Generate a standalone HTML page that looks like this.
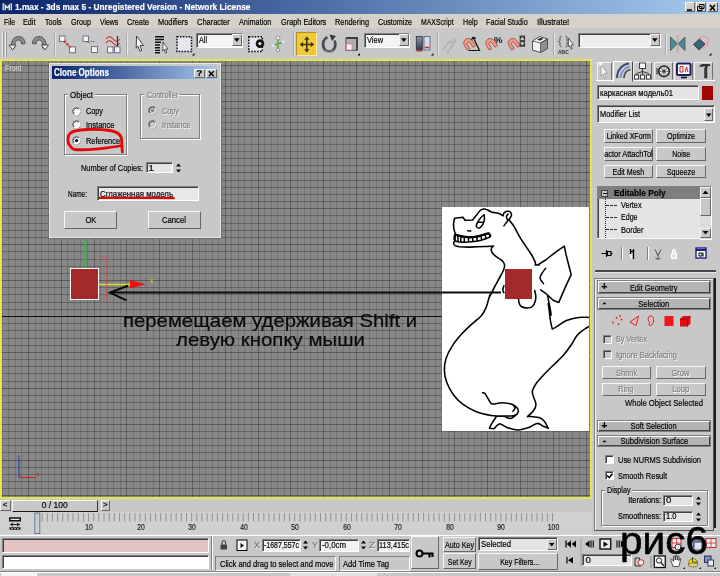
<!DOCTYPE html>
<html><head><meta charset="utf-8"><title>1.max - 3ds max 5</title>
<style>
html,body{margin:0;padding:0;background:#c8c8c8;}
body{width:720px;height:576px;position:relative;overflow:hidden;filter:blur(0.35px);font-family:"Liberation Sans",sans-serif;font-size:11px;}
div,span.t,svg{position:absolute;box-sizing:border-box;}
span.t{white-space:nowrap;display:inline-block;-webkit-text-stroke:0.2px currentColor;}
.btn{background:#c8c8c8;border:1px solid;border-color:#f6f6f6 #666 #666 #f6f6f6;}
.sunk{background:#e4e4e4;border:1px solid;border-color:#808080 #fff #fff #808080;box-shadow:inset 1px 1px 0 #404040;}
.sunkg{background:#c8c8c8;border:1px solid;border-color:#808080 #fff #fff #808080;}
.grp{border:1px solid #808080;box-shadow:1px 1px 0 #fff, inset 1px 1px 0 #fff;}
.hdr{background:#b4b4b4;border:1px solid;border-color:#fff #404040 #404040 #fff;box-shadow:0 0 0 1px #808080;}
</style></head><body>
<div style="left:0.00px;top:0.00px;width:720.00px;height:13.50px;background:linear-gradient(to right,#0a246a 0%,#a6caf0 100%);"></div>
<div style="left:0.00px;top:13.50px;width:720.00px;height:14.50px;background:#d6d2c8;"></div>
<svg style="left:2px;top:2px" width="11" height="10" viewBox="0 0 11 10"><rect x=".5" y=".8" width="9.500" height="8" fill="#1a2a5a"/><path d="M1.200 1.300v7M9.300 1.300v7" stroke="#e8e8f0" stroke-width="1.300"/><path d="M3.300 8.300v-5l2 2.500l2-2.500v5" fill="none" stroke="#f4f4e8" stroke-width="1.300"/></svg>
<span class="t" id="t0" style="font-size:9.8px;line-height:12px;color:#fff;top:1.00px;font-weight:bold;left:14.50px;transform-origin:left center;transform:scaleX(0.848);">1.max - 3ds max 5 - Unregistered Version - Network License</span>
<div class="btn" style="left:684.50px;top:2.00px;width:10.00px;height:10.00px;background:#d4d0c8;"></div>
<div class="btn" style="left:695.50px;top:2.00px;width:10.00px;height:10.00px;background:#d4d0c8;"></div>
<div class="btn" style="left:707.00px;top:2.00px;width:10.50px;height:10.00px;background:#d4d0c8;"></div>
<svg style="left:684px;top:1.5px" width="36" height="11" viewBox="0 0 36 11"><path d="M3 8h5" stroke="#000" stroke-width="1.6" fill="none"/><path d="M15.5 2.5h4.5v4h-4.5zM13.5 4.5h4.5v4h-4.5z" stroke="#000" stroke-width="1" fill="#c8c8c8"/><path d="M26 3l5 5.5M31 3l-5 5.5" stroke="#000" stroke-width="1.5" fill="none"/></svg>
<span class="t" id="t1" style="font-size:9.6px;line-height:12px;color:#000;top:15.80px;left:4.00px;transform-origin:left center;transform:scaleX(0.711);">File</span>
<span class="t" id="t2" style="font-size:9.6px;line-height:12px;color:#000;top:15.80px;left:23.30px;transform-origin:left center;transform:scaleX(0.749);">Edit</span>
<span class="t" id="t3" style="font-size:9.6px;line-height:12px;color:#000;top:15.80px;left:45.00px;transform-origin:left center;transform:scaleX(0.745);">Tools</span>
<span class="t" id="t4" style="font-size:9.6px;line-height:12px;color:#000;top:15.80px;left:70.70px;transform-origin:left center;transform:scaleX(0.750);">Group</span>
<span class="t" id="t5" style="font-size:9.6px;line-height:12px;color:#000;top:15.80px;left:100.00px;transform-origin:left center;transform:scaleX(0.720);">Views</span>
<span class="t" id="t6" style="font-size:9.6px;line-height:12px;color:#000;top:15.80px;left:127.30px;transform-origin:left center;transform:scaleX(0.764);">Create</span>
<span class="t" id="t7" style="font-size:9.6px;line-height:12px;color:#000;top:15.80px;left:158.30px;transform-origin:left center;transform:scaleX(0.771);">Modifiers</span>
<span class="t" id="t8" style="font-size:9.6px;line-height:12px;color:#000;top:15.80px;left:197.30px;transform-origin:left center;transform:scaleX(0.776);">Character</span>
<span class="t" id="t9" style="font-size:9.6px;line-height:12px;color:#000;top:15.80px;left:239.30px;transform-origin:left center;transform:scaleX(0.759);">Animation</span>
<span class="t" id="t10" style="font-size:9.6px;line-height:12px;color:#000;top:15.80px;left:280.70px;transform-origin:left center;transform:scaleX(0.765);">Graph Editors</span>
<span class="t" id="t11" style="font-size:9.6px;line-height:12px;color:#000;top:15.80px;left:335.00px;transform-origin:left center;transform:scaleX(0.768);">Rendering</span>
<span class="t" id="t12" style="font-size:9.6px;line-height:12px;color:#000;top:15.80px;left:377.70px;transform-origin:left center;transform:scaleX(0.750);">Customize</span>
<span class="t" id="t13" style="font-size:9.6px;line-height:12px;color:#000;top:15.80px;left:420.70px;transform-origin:left center;transform:scaleX(0.719);">MAXScript</span>
<span class="t" id="t14" style="font-size:9.6px;line-height:12px;color:#000;top:15.80px;left:462.70px;transform-origin:left center;transform:scaleX(0.740);">Help</span>
<span class="t" id="t15" style="font-size:9.6px;line-height:12px;color:#000;top:15.80px;left:486.00px;transform-origin:left center;transform:scaleX(0.752);">Facial Studio</span>
<span class="t" id="t16" style="font-size:9.6px;line-height:12px;color:#000;top:15.80px;left:536.70px;transform-origin:left center;transform:scaleX(0.830);">Illustrate!</span>
<div style="left:2.00px;top:31.50px;width:1.00px;height:25.00px;background:#ececec;box-shadow:1px 0 0 #9a9a9a;"></div>
<div style="left:4.50px;top:31.50px;width:1.00px;height:25.00px;background:#ececec;box-shadow:1px 0 0 #9a9a9a;"></div>
<div style="left:0.00px;top:58.70px;width:592.00px;height:440.60px;background:#878787;"></div>
<svg style="left:0;top:58.7px" width="592" height="440.6" viewBox="0 58.7 592 440.6" shape-rendering="crispEdges"><path d="M2.26 58.7V499.3M8.82 58.7V499.3M15.38 58.7V499.3M21.94 58.7V499.3M35.06 58.7V499.3M41.62 58.7V499.3M48.18 58.7V499.3M54.74 58.7V499.3M67.86 58.7V499.3M74.42 58.7V499.3M80.98 58.7V499.3M87.54 58.7V499.3M100.66 58.7V499.3M107.22 58.7V499.3M113.78 58.7V499.3M120.34 58.7V499.3M133.46 58.7V499.3M140.02 58.7V499.3M146.58 58.7V499.3M153.14 58.7V499.3M166.26 58.7V499.3M172.82 58.7V499.3M179.38 58.7V499.3M185.94 58.7V499.3M199.06 58.7V499.3M205.62 58.7V499.3M212.18 58.7V499.3M218.74 58.7V499.3M231.86 58.7V499.3M238.42 58.7V499.3M244.98 58.7V499.3M251.54 58.7V499.3M264.66 58.7V499.3M271.22 58.7V499.3M277.78 58.7V499.3M284.34 58.7V499.3M297.46 58.7V499.3M304.02 58.7V499.3M310.58 58.7V499.3M317.14 58.7V499.3M330.26 58.7V499.3M336.82 58.7V499.3M343.38 58.7V499.3M349.94 58.7V499.3M363.06 58.7V499.3M369.62 58.7V499.3M376.18 58.7V499.3M382.74 58.7V499.3M395.86 58.7V499.3M402.42 58.7V499.3M408.98 58.7V499.3M415.54 58.7V499.3M428.66 58.7V499.3M435.22 58.7V499.3M441.78 58.7V499.3M448.34 58.7V499.3M461.46 58.7V499.3M468.02 58.7V499.3M474.58 58.7V499.3M481.14 58.7V499.3M494.26 58.7V499.3M500.82 58.7V499.3M507.38 58.7V499.3M513.94 58.7V499.3M527.06 58.7V499.3M533.62 58.7V499.3M540.18 58.7V499.3M546.74 58.7V499.3M559.86 58.7V499.3M566.42 58.7V499.3M572.98 58.7V499.3M579.54 58.7V499.3" stroke="#000" stroke-opacity=".14" stroke-width="1" fill="none"/><path d="M0 72.08H592M0 79.26H592M0 86.44H592M0 93.62H592M0 107.98H592M0 115.16H592M0 122.34H592M0 129.52H592M0 143.88H592M0 151.06H592M0 158.24H592M0 165.42H592M0 179.78H592M0 186.96H592M0 194.14H592M0 201.32H592M0 215.68H592M0 222.86H592M0 230.04H592M0 237.22H592M0 251.58H592M0 258.76H592M0 265.94H592M0 273.12H592M0 287.48H592M0 294.66H592M0 301.84H592M0 309.02H592M0 323.38H592M0 330.56H592M0 337.74H592M0 344.92H592M0 359.28H592M0 366.46H592M0 373.64H592M0 380.82H592M0 395.18H592M0 402.36H592M0 409.54H592M0 416.72H592M0 431.08H592M0 438.26H592M0 445.44H592M0 452.62H592M0 466.98H592M0 474.16H592M0 481.34H592M0 488.52H592" stroke="#000" stroke-opacity=".24" stroke-width="1" fill="none"/><path d="M28.50 58.7V499.3M61.30 58.7V499.3M94.10 58.7V499.3M126.90 58.7V499.3M159.70 58.7V499.3M192.50 58.7V499.3M225.30 58.7V499.3M258.10 58.7V499.3M290.90 58.7V499.3M323.70 58.7V499.3M356.50 58.7V499.3M389.30 58.7V499.3M422.10 58.7V499.3M454.90 58.7V499.3M487.70 58.7V499.3M520.50 58.7V499.3M553.30 58.7V499.3M586.10 58.7V499.3" stroke="#000" stroke-opacity=".28" stroke-width="1" fill="none"/><path d="M0 64.90H592M0 100.80H592M0 136.70H592M0 172.60H592M0 208.50H592M0 244.40H592M0 280.30H592M0 316.20H592M0 352.10H592M0 388.00H592M0 423.90H592M0 459.80H592M0 495.70H592" stroke="#000" stroke-opacity=".33" stroke-width="1" fill="none"/></svg>
<div style="left:0.00px;top:58.70px;width:592.00px;height:440.60px;border:2.8px solid #e6e64a;"></div>
<span class="t" id="t17" style="font-size:9px;line-height:11px;color:#cccccc;top:62.80px;left:5.00px;transform-origin:left center;transform:scaleX(0.785);">Front</span>
<div style="left:2.00px;top:316.00px;width:441.00px;height:1.40px;background:#101010;"></div>
<div style="left:49.30px;top:63.00px;width:171.40px;height:175.30px;background:#c8c8c8;border:1px solid #e6e6e6;box-shadow:1px 1px 0 #6a6a6a;"></div>
<div style="left:51.80px;top:66.00px;width:166.40px;height:13.00px;background:linear-gradient(to right,#0a246a 0%,#a6caf0 100%);"></div>
<span class="t" id="t18" style="font-size:10px;line-height:12px;color:#fff;top:66.70px;font-weight:bold;left:53.50px;transform-origin:left center;transform:scaleX(0.805);">Clone Options</span>
<div class="btn" style="left:194.00px;top:68.50px;width:10.50px;height:9.50px;"></div>
<div class="btn" style="left:206.00px;top:68.50px;width:10.50px;height:9.50px;"></div>
<span class="t" id="t19" style="font-size:9.5px;line-height:12px;color:#000;top:67.30px;font-weight:bold;left:196.39px;transform-origin:center center;">?</span>
<svg style="left:206px;top:68.5px" width="11" height="10" viewBox="0 0 11 10"><path d="M2.8 2.3l5 5M7.8 2.3l-5 5" stroke="#000" stroke-width="1.4" fill="none"/></svg>
<div class="grp" style="left:64.30px;top:94.30px;width:62.70px;height:61.20px;"></div>
<div class="grp" style="left:140.30px;top:94.30px;width:60.10px;height:44.70px;"></div>
<div style="left:68.00px;top:89.00px;width:27.00px;height:10.00px;background:#c8c8c8;"></div>
<div style="left:144.00px;top:89.00px;width:35.00px;height:10.00px;background:#c8c8c8;"></div>
<span class="t" id="t20" style="font-size:9.6px;line-height:12px;color:#000;top:88.50px;left:70.00px;transform-origin:left center;transform:scaleX(0.829);">Object</span>
<span class="t" id="t21" style="font-size:9.6px;line-height:12px;color:#808080;top:88.50px;left:146.50px;transform-origin:left center;transform:scaleX(0.745);text-shadow:1px 1px 0 #fff;">Controller</span>
<svg style="left:71.10px;top:105.50px" width="11" height="11" viewBox="0 0 11 11"><circle cx="5.5" cy="5.5" r="4" fill="#fff" stroke="#808080" stroke-width="1"/><path d="M2.700 8.300A4 4 0 0 0 8.300 2.700" fill="none" stroke="#fff" stroke-width="1"/><path d="M3.200 7.800A3.200 3.200 0 0 1 7.800 3.200" fill="none" stroke="#404040" stroke-width=".9"/></svg>
<svg style="left:71.10px;top:119.30px" width="11" height="11" viewBox="0 0 11 11"><circle cx="5.5" cy="5.5" r="4" fill="#fff" stroke="#808080" stroke-width="1"/><path d="M2.700 8.300A4 4 0 0 0 8.300 2.700" fill="none" stroke="#fff" stroke-width="1"/><path d="M3.200 7.800A3.200 3.200 0 0 1 7.800 3.200" fill="none" stroke="#404040" stroke-width=".9"/></svg>
<svg style="left:71.10px;top:135.30px" width="11" height="11" viewBox="0 0 11 11"><circle cx="5.5" cy="5.5" r="4" fill="#fff" stroke="#808080" stroke-width="1"/><path d="M2.700 8.300A4 4 0 0 0 8.300 2.700" fill="none" stroke="#fff" stroke-width="1"/><path d="M3.200 7.800A3.200 3.200 0 0 1 7.800 3.200" fill="none" stroke="#404040" stroke-width=".9"/><circle cx="5.5" cy="5.5" r="1.600" fill="#000"/></svg>
<span class="t" id="t22" style="font-size:9.6px;line-height:12px;color:#000;top:105.00px;left:85.50px;transform-origin:left center;transform:scaleX(0.759);">Copy</span>
<span class="t" id="t23" style="font-size:9.6px;line-height:12px;color:#000;top:118.60px;left:85.50px;transform-origin:left center;transform:scaleX(0.786);">Instance</span>
<span class="t" id="t24" style="font-size:9.6px;line-height:12px;color:#000;top:134.50px;left:85.50px;transform-origin:left center;transform:scaleX(0.768);">Reference</span>
<svg style="left:146.90px;top:105.30px" width="11" height="11" viewBox="0 0 11 11"><circle cx="5.5" cy="5.5" r="4" fill="#c8c8c8" stroke="#808080" stroke-width="1"/><path d="M2.700 8.300A4 4 0 0 0 8.300 2.700" fill="none" stroke="#fff" stroke-width="1"/><path d="M3.200 7.800A3.200 3.200 0 0 1 7.800 3.200" fill="none" stroke="#404040" stroke-width=".9"/><circle cx="5.5" cy="5.5" r="1.600" fill="#808080"/></svg>
<svg style="left:146.90px;top:119.30px" width="11" height="11" viewBox="0 0 11 11"><circle cx="5.5" cy="5.5" r="4" fill="#c8c8c8" stroke="#808080" stroke-width="1"/><path d="M2.700 8.300A4 4 0 0 0 8.300 2.700" fill="none" stroke="#fff" stroke-width="1"/><path d="M3.200 7.800A3.200 3.200 0 0 1 7.800 3.200" fill="none" stroke="#404040" stroke-width=".9"/></svg>
<span class="t" id="t25" style="font-size:9.6px;line-height:12px;color:#808080;top:105.00px;left:161.50px;transform-origin:left center;transform:scaleX(0.759);text-shadow:1px 1px 0 #fff;">Copy</span>
<span class="t" id="t26" style="font-size:9.6px;line-height:12px;color:#808080;top:118.60px;left:161.50px;transform-origin:left center;transform:scaleX(0.786);text-shadow:1px 1px 0 #fff;">Instance</span>
<span class="t" id="t27" style="font-size:9.6px;line-height:12px;color:#000;top:161.50px;left:80.70px;transform-origin:left center;transform:scaleX(0.775);">Number of Copies:</span>
<div class="sunk" style="left:145.70px;top:161.70px;width:27.00px;height:11.00px;"></div>
<span class="t" id="t28" style="font-size:9.6px;line-height:12px;color:#000;top:161.50px;left:148.50px;transform-origin:left center;">1</span>
<svg style="left:175px;top:161.5px" width="7" height="12" viewBox="0 0 7 12"><path d="M3.5 1.5L6 4.5H1zM3.5 10.5L6 7.5H1z" fill="#000"/></svg>
<span class="t" id="t29" style="font-size:9.6px;line-height:12px;color:#000;top:187.50px;left:68.30px;transform-origin:left center;transform:scaleX(0.672);">Name:</span>
<div class="sunk" style="left:97.30px;top:186.00px;width:101.70px;height:14.70px;background:#e8e8e8;"></div>
<span class="t" id="t30" style="font-size:9.6px;line-height:12px;color:#000;top:187.50px;left:99.50px;transform-origin:left center;transform:scaleX(0.814);">Сглаженная модель</span>
<div class="btn" style="left:64.30px;top:211.00px;width:52.40px;height:18.30px;"></div>
<div class="btn" style="left:147.70px;top:211.00px;width:53.30px;height:18.30px;"></div>
<span class="t" id="t31" style="font-size:9.6px;line-height:12px;color:#000;top:214.30px;left:83.56px;transform-origin:center center;transform:scaleX(0.793);">OK</span>
<span class="t" id="t32" style="font-size:9.6px;line-height:12px;color:#000;top:214.30px;left:159.36px;transform-origin:center center;transform:scaleX(0.803);">Cancel</span>
<svg style="left:60px;top:120px" width="130" height="90" viewBox="60 120 130 90"><path d="M70.500 146.500C67 143 67 136 70.500 133C76 129 96 128.500 110 130.500C117 131.500 120.500 134 121.500 138.500L122.300 152M121.800 145.500C110 148 86 150.500 74.500 149.500C72.500 149 71.500 148 70.500 146.500" fill="none" stroke="#e00808" stroke-width="2.800" stroke-linejoin="round" stroke-linecap="round"/><path d="M99 197.8c25 .4 50 -.2 75.5 .3" fill="none" stroke="#e00000" stroke-width="2.200"/></svg>
<div style="left:70.20px;top:268.00px;width:29.20px;height:31.80px;background:#a42a2a;border:1px solid #f4f4f4;"></div>
<svg style="left:60px;top:236px" width="100" height="72" viewBox="60 236 100 72"><path d="M85.400 239.500v28.500" stroke="#3cb03c" stroke-width="2.200"/><path d="M99.400 284.400h32" stroke="#e0d828" stroke-width="1.500"/><path d="M130 280l15.800 4.200l-15.800 4.200z" fill="#f01010"/><path d="M99.400 257h7v46" fill="none" stroke="#d04848" stroke-width=".8" stroke-opacity=".8"/><text x="150" y="283" font-family="Liberation Sans,sans-serif" font-size="7" fill="#d8d030">x</text></svg>
<span class="t" id="t33" style="font-size:18.5px;line-height:23px;color:#0a0a0a;top:308.50px;left:123.00px;transform-origin:left center;transform:scaleX(1.098);">перемещаем удерживая Shift и</span>
<span class="t" id="t34" style="font-size:18.5px;line-height:23px;color:#0a0a0a;top:328.00px;left:176.00px;transform-origin:left center;transform:scaleX(1.103);">левую кнопку мыши</span>
<svg style="left:14px;top:454.5px" width="30" height="24" viewBox="14 448 30 24"><path d="M19 470.500v-20" stroke="#2030c0" stroke-width="1"/><path d="M19 470.500h16.500" stroke="#d02020" stroke-width="1"/><text x="17" y="449.500" font-family="Liberation Sans,sans-serif" font-size="6" fill="#2030c0">z</text><text x="36.500" y="469" font-family="Liberation Sans,sans-serif" font-size="6" fill="#d02020">x</text></svg>
<div style="left:442.30px;top:207.30px;width:146.70px;height:223.80px;background:#fff;"></div>
<svg style="left:430px;top:195px" width="159" height="240" viewBox="430 195 159 240"><path fill="none" stroke="#000" stroke-width="1.55" stroke-linejoin="round" stroke-linecap="round" d="M454.6 218.2L462.9 217.2L465.0 220.3L472.6 220.0M472.6 220.0C473.3 219.1 475.4 216.4 476.8 214.7C478.2 213.0 479.5 210.8 481.0 209.9C482.5 208.9 484.1 208.8 485.8 209.2C487.6 209.5 489.3 211.2 491.4 211.9C493.5 212.6 496.4 212.7 498.3 213.3C500.3 214.0 502.4 215.4 503.2 215.8M503.2 215.8C503.4 215.3 503.2 213.4 504.2 212.6C505.1 211.9 507.5 211.0 508.8 211.2C510.0 211.5 511.3 212.9 511.5 214.0C511.8 215.2 510.7 217.2 510.1 218.2C509.6 219.2 508.4 219.9 508.1 220.3M508.1 214.0C507.8 214.5 506.5 215.9 506.4 216.8C506.3 217.7 507.2 219.1 507.4 219.6M508.1 220.3C507.7 220.7 506.7 222.1 506.0 223.1C505.3 224.0 504.2 225.4 503.9 225.8M509.4 220.3C510.1 221.2 512.3 223.9 513.6 225.8C514.9 227.8 515.9 230.0 517.1 232.1C518.2 234.2 519.1 235.9 520.6 238.3C522.1 240.8 524.3 243.9 526.1 246.7C528.0 249.4 530.2 252.5 531.7 255.0C533.2 257.5 534.4 260.3 535.1 261.9C535.8 263.6 535.1 264.2 535.8 264.7C536.5 265.2 538.7 265.0 539.3 265.0M454.6 218.2C454.4 219.0 453.7 221.3 453.6 223.1C453.5 224.8 453.6 226.9 453.9 228.6C454.2 230.3 454.8 232.4 455.3 233.5C455.7 234.5 456.4 234.6 456.7 234.9M455.3 234.9C456.2 235.1 458.8 235.9 460.8 236.2C462.9 236.6 465.2 237.2 467.8 237.2C470.3 237.3 473.6 237.1 476.1 236.7C478.7 236.3 481.0 235.4 483.1 234.9C485.1 234.3 487.4 233.2 488.6 233.5C489.8 233.7 490.5 235.4 490.3 236.2C490.0 237.1 488.9 237.6 487.2 238.3C485.6 239.0 482.8 239.8 480.3 240.4C477.7 241.0 474.7 241.5 471.9 241.8C469.2 242.1 466.2 242.3 463.6 242.2C461.1 242.2 458.2 241.8 456.7 241.4C455.2 241.0 454.8 240.8 454.6 239.7C454.4 238.6 455.2 235.7 455.3 234.9M457.8 235.8L458.1 241.1M460.8 236.7L460.8 241.7M464.3 237.2L464.3 241.9M468.5 237.5L468.5 241.9M472.6 237.2L472.8 241.7M476.8 236.7L477.2 241.1M481.0 235.8L481.7 240.0M485.1 234.6L486.1 238.8M454.6 241.4C454.4 241.7 453.5 242.8 453.6 243.5C453.7 244.2 454.0 245.0 455.0 245.6C456.0 246.1 457.3 246.4 459.4 246.7C461.6 246.9 464.8 247.1 467.8 247.1C470.8 247.1 474.5 246.8 477.5 246.7C480.5 246.6 483.2 246.5 485.8 246.4C488.5 246.3 492.2 246.0 493.5 246.0M493.5 246.0C493.1 246.4 491.7 247.4 491.4 248.3C491.1 249.3 491.2 250.4 491.7 251.5C492.1 252.6 492.9 253.8 494.2 255.0C495.4 256.2 497.5 257.3 499.0 258.5C500.5 259.6 502.3 260.7 503.2 261.9C504.1 263.2 504.6 264.6 504.6 266.1C504.6 267.6 504.0 269.1 503.2 271.0C502.4 272.8 500.9 275.0 499.7 277.2C498.6 279.4 496.8 283.0 496.2 284.2M484.2 214.7C483.5 215.3 481.4 216.8 480.3 218.2C479.1 219.6 477.9 221.7 477.2 223.1C476.6 224.4 476.0 225.7 476.4 226.5C476.8 227.3 478.5 228.4 479.6 227.9C480.7 227.5 482.2 225.3 483.1 223.8C483.9 222.2 484.3 220.4 484.4 218.9C484.6 217.4 484.2 215.4 484.2 214.7M478.2 221.9L483.3 222.5M467.8 230.8L470.6 231.1M535.1 264.9L537.9 264.9L545.6 260.0L555.3 252.4L564.3 246.1L565.7 253.1L568.5 264.2L571.2 274.6L565.7 286.4L558.8 302.4L553.2 300.3L545.6 293.3L540.7 289.9M545.6 268.3C545.0 269.1 543.0 271.6 542.1 273.2C541.2 274.8 539.8 276.3 540.0 278.1C540.2 279.8 542.9 282.7 543.5 283.6M547.6 296.1C547.9 297.3 548.6 300.7 549.0 303.1C549.5 305.4 550.1 308.0 550.4 310.0C550.8 312.0 551.0 314.1 551.1 314.9M518.5 298.9C518.6 299.6 518.7 301.8 519.2 303.1C519.6 304.3 519.9 305.7 521.2 306.5C522.6 307.3 525.6 307.9 527.5 307.9C529.4 307.9 531.1 307.6 532.4 306.5C533.6 305.5 534.6 303.4 535.1 301.7C535.7 299.9 535.9 298.0 535.8 296.1C535.8 294.3 534.9 291.5 534.7 290.6M503.9 285.7C503.7 286.4 502.8 288.7 502.8 289.9C502.8 291.0 503.7 292.2 503.9 292.6M500.4 276.7C499.6 278.1 497.3 281.8 495.6 285.0C493.8 288.2 490.9 294.3 490.0 296.1M489.8 295.0C489.2 297.0 487.6 303.7 486.2 307.2C484.8 310.6 484.0 312.6 481.3 315.7C478.7 318.7 473.8 322.1 470.4 325.4C466.9 328.6 463.7 331.7 460.7 335.1C457.6 338.6 454.6 342.2 452.2 346.1C449.7 349.9 447.4 354.2 446.1 358.2C444.8 362.3 444.3 366.3 444.4 370.4C444.5 374.4 445.3 378.5 446.8 382.5C448.3 386.6 450.7 391.0 453.4 394.7C456.1 398.3 459.2 401.6 463.1 404.4C466.9 407.2 471.8 409.9 476.5 411.7C481.1 413.5 486.4 414.6 491.1 415.4C495.7 416.1 500.6 416.1 504.4 416.1C508.3 416.1 511.8 416.1 514.2 415.4C516.5 414.6 517.9 413.0 518.3 411.7C518.7 410.4 517.6 408.5 516.6 407.3C515.6 406.1 514.9 405.2 512.5 404.4C510.0 403.6 505.4 402.8 502.0 402.7C498.6 402.6 494.5 404.4 492.3 403.9C490.0 403.4 489.8 401.3 488.6 399.5C487.4 397.8 486.0 394.6 485.0 393.5C484.0 392.3 483.0 392.9 482.5 392.7M512.5 404.4C512.9 405.0 514.8 406.9 514.9 408.1C515.0 409.2 513.3 410.7 512.9 411.2M504.4 416.1C505.4 416.5 508.4 418.8 510.5 418.5C512.7 418.2 516.2 414.9 517.3 414.1M496.4 416.6C495.7 417.6 493.4 420.7 492.3 422.6C491.1 424.6 489.8 427.3 489.4 428.2M489.4 428.2L494.0 428.7M494.0 428.7C494.9 427.9 497.4 424.1 499.6 423.9C501.7 423.7 503.8 426.5 506.9 427.5C509.9 428.5 514.2 429.9 517.8 429.9C521.4 429.9 525.5 428.6 528.7 427.5C532.0 426.4 534.8 423.6 537.3 423.4C539.7 423.2 541.5 425.5 543.3 426.3C545.2 427.1 547.4 427.9 548.2 428.2M548.2 428.2C547.6 427.1 546.0 423.2 544.5 421.4C543.1 419.7 541.9 418.6 539.7 417.8C537.5 417.0 533.2 416.8 531.2 416.6C529.1 416.4 528.1 416.6 527.5 416.6M527.5 416.6C528.5 415.6 532.2 412.5 533.6 410.5C535.0 408.5 536.0 406.6 536.0 404.4C536.0 402.2 534.2 399.3 533.6 397.1C533.0 394.9 532.0 393.3 532.4 391.0C532.8 388.8 534.0 386.6 536.0 383.7C538.1 380.9 541.5 377.3 544.5 374.0C547.6 370.8 551.0 367.5 554.3 364.3C557.5 361.1 561.2 357.8 564.0 354.6C566.8 351.3 569.1 348.1 571.3 344.8C573.5 341.6 575.1 337.8 577.4 335.1C579.6 332.5 582.8 330.5 584.7 329.0C586.6 327.6 588.1 327.0 588.8 326.6M548.2 303.5C548.4 304.9 549.0 309.0 549.4 312.0C549.8 315.1 550.1 318.9 550.6 321.7C551.1 324.6 552.0 327.8 552.3 329.0M552.3 329.0C553.1 328.6 554.4 328.0 556.7 326.6C559.1 325.2 562.8 322.1 566.4 320.5C570.1 319.0 574.9 317.9 578.6 317.4C582.3 316.8 587.1 317.4 588.8 317.4"/><path fill="none" stroke="#000" stroke-width="2.3" stroke-linejoin="round" stroke-linecap="round" d="M454.6 239.7C454.7 238.9 454.2 235.4 455.3 234.9C456.3 234.3 458.8 235.9 460.8 236.2C462.9 236.6 465.2 237.2 467.8 237.2C470.3 237.3 473.6 237.1 476.1 236.7C478.7 236.3 481.0 235.4 483.1 234.9C485.1 234.3 487.4 233.2 488.6 233.5C489.8 233.7 490.0 235.8 490.3 236.2"/></svg>
<div style="left:505.00px;top:269.20px;width:27.00px;height:29.40px;background:#a42a2a;"></div>
<svg style="left:105px;top:280px" width="410" height="26" viewBox="105 280 410 26"><path d="M110.500 292.600H501" stroke="#0a0a0a" stroke-width="2" fill="none"/><path d="M128 285.800L110 292.600L126.500 300.400" stroke="#0a0a0a" stroke-width="2.100" fill="none"/></svg>
<div style="left:595.50px;top:80.00px;width:119.00px;height:1.00px;background:#fff;"></div>
<div style="left:596.50px;top:62.30px;width:15.80px;height:18.00px;border:1px solid;border-color:#f4f4f4 #707070 transparent #f4f4f4;"></div>
<div style="left:612.80px;top:61.00px;width:19.80px;height:20.50px;background:#d2d2d2;border:1px solid;border-color:#fff #404040 #d2d2d2 #fff;"></div>
<div style="left:633.10px;top:62.30px;width:19.40px;height:18.00px;border:1px solid;border-color:#f4f4f4 #707070 transparent #f4f4f4;"></div>
<div style="left:653.50px;top:62.30px;width:19.40px;height:18.00px;border:1px solid;border-color:#f4f4f4 #707070 transparent #f4f4f4;"></div>
<div style="left:673.90px;top:62.30px;width:19.40px;height:18.00px;border:1px solid;border-color:#f4f4f4 #707070 transparent #f4f4f4;"></div>
<div style="left:694.30px;top:62.30px;width:19.20px;height:18.00px;border:1px solid;border-color:#f4f4f4 #707070 transparent #f4f4f4;"></div>
<svg style="left:594px;top:60px" width="122" height="22" viewBox="594 60 122 22"><path d="M601 64.500l6.500 9h-3l1.800 4.500l-1.500 .7l-1.900-4.600l-1.900 1.900z" fill="#fafafa" stroke="#909090" stroke-width=".8"/><path d="M600.500 62v4M598.500 64h4M599 62.500l3 3M602 62.500l-3 3" stroke="#fff" stroke-width=".9"/><path d="M617 78c0-8 5-13.500 12-14.500" fill="none" stroke="#384878" stroke-width="2"/><path d="M620.500 78c0-6 4-10.500 9.500-11.500" fill="none" stroke="#8098c8" stroke-width="2"/><path d="M624 78c0-4.500 3-7.500 6.500-8.500" fill="none" stroke="#404858" stroke-width="1.600"/><rect x="639.500" y="63" width="6" height="5.500" fill="#fff" stroke="#303030" stroke-width=".9"/><path d="M642.500 68.500v3M636.500 75.500v-2l6-2l6 2v2M642.500 71.500v4" fill="none" stroke="#303030" stroke-width=".9"/><rect x="634.500" y="75" width="4" height="4" fill="#fff" stroke="#303030" stroke-width=".9"/><rect x="640.500" y="75" width="4" height="4" fill="#fff" stroke="#303030" stroke-width=".9"/><rect x="646.500" y="75" width="4" height="4" fill="#fff" stroke="#303030" stroke-width=".9"/><circle cx="664" cy="71.300" r="5.300" fill="#e8e8e8" stroke="#202020" stroke-width="1.600"/><circle cx="664" cy="71.300" r="1.400" fill="#202020"/><path d="M664 66.500v9.600M659.200 71.300h9.600M660.600 67.900l6.800 6.800M667.400 67.900l-6.800 6.800" stroke="#404040" stroke-width=".7"/><path d="M657 68v6.500" stroke="#202020" stroke-width="1"/><rect x="677" y="63.500" width="13.500" height="11.500" rx="1" fill="#f8f8f8" stroke="#182060" stroke-width="2"/><path d="M680 66.500h3v5.500h-3zM685 72l1.500-5l1.500 5" fill="none" stroke="#d02020" stroke-width="1"/><path d="M681 77.500h6" stroke="#101010" stroke-width="1.600"/><path d="M699 66.500c1-2 3-2.500 5-2.500h5c1 0 1.500 1 1 2l-2.500 .3v1.700h-2.500v-1.500c-2 0-3.500 .5-6 0z" fill="#303030"/><path d="M704.500 68v10h2.500v-10z" fill="#404040" stroke="#202020" stroke-width=".5"/></svg>
<div class="sunk" style="left:597.30px;top:85.20px;width:101.40px;height:14.60px;"></div>
<span class="t" id="t35" style="font-size:9.6px;line-height:12px;color:#000;top:87.00px;left:600.00px;transform-origin:left center;transform:scaleX(0.796);">каркасная модель01</span>
<div style="left:702.20px;top:85.50px;width:11.00px;height:14.00px;background:#a00404;"></div>
<div class="sunk" style="left:597.30px;top:105.00px;width:117.40px;height:18.30px;"></div>
<span class="t" id="t36" style="font-size:9.6px;line-height:12px;color:#000;top:108.00px;left:600.00px;transform-origin:left center;transform:scaleX(0.773);">Modifier List</span>
<div class="btn" style="left:703.60px;top:107.50px;width:9.50px;height:13.50px;"></div>
<svg style="left:703.6px;top:109px" width="10" height="12" viewBox="0 0 10 12"><path d="M2 4.500h5.500L4.750 8z" fill="#000"/></svg>
<div class="btn" style="left:604.30px;top:129.20px;width:48.70px;height:13.80px;overflow:hidden;"></div>
<span class="t" id="t37" style="font-size:9.6px;line-height:12px;color:#000;top:130.30px;left:598.79px;transform-origin:center center;transform:scaleX(0.737);">Linked XForm</span>
<div class="btn" style="left:656.40px;top:129.20px;width:49.30px;height:13.80px;overflow:hidden;"></div>
<span class="t" id="t38" style="font-size:9.6px;line-height:12px;color:#000;top:130.30px;left:662.12px;transform-origin:center center;transform:scaleX(0.740);">Optimize</span>
<div class="btn" style="left:604.30px;top:147.30px;width:48.70px;height:13.70px;overflow:hidden;"></div>
<span class="t" id="t39" style="font-size:9.6px;line-height:12px;color:#000;top:148.35px;left:597.18px;transform-origin:center center;transform:scaleX(0.771);">actor AttachTol</span>
<div class="btn" style="left:656.40px;top:147.30px;width:49.30px;height:13.70px;overflow:hidden;"></div>
<span class="t" id="t40" style="font-size:9.6px;line-height:12px;color:#000;top:148.35px;left:668.78px;transform-origin:center center;transform:scaleX(0.734);">Noise</span>
<div class="btn" style="left:604.30px;top:164.60px;width:48.70px;height:13.90px;overflow:hidden;"></div>
<span class="t" id="t41" style="font-size:9.6px;line-height:12px;color:#000;top:165.75px;left:607.31px;transform-origin:center center;transform:scaleX(0.738);">Edit Mesh</span>
<div class="btn" style="left:656.40px;top:164.60px;width:49.30px;height:13.90px;overflow:hidden;"></div>
<span class="t" id="t42" style="font-size:9.6px;line-height:12px;color:#000;top:165.75px;left:662.11px;transform-origin:center center;transform:scaleX(0.752);">Squeeze</span>
<div class="sunk" style="left:596.70px;top:185.50px;width:115.30px;height:54.20px;"></div>
<div style="left:598.20px;top:187.00px;width:101.50px;height:12.00px;background:#7e7e7e;"></div>
<div style="left:601.00px;top:189.50px;width:7.00px;height:7.00px;background:#c8c8c8;border:1px solid #404040;"></div>
<div style="left:602.50px;top:192.60px;width:4.00px;height:1.00px;background:#000;"></div>
<span class="t" id="t43" style="font-size:9.6px;line-height:12px;color:#000;top:187.00px;font-weight:bold;left:614.00px;transform-origin:left center;transform:scaleX(0.855);">Editable Poly</span>
<div style="left:605.00px;top:197.00px;width:1.00px;height:41.00px;border-left:1px dotted #303030;"></div>
<div style="left:606.00px;top:204.60px;width:10.50px;height:1.00px;border-top:1px dashed #303030;"></div>
<span class="t" id="t44" style="font-size:9.6px;line-height:12px;color:#000;top:199.10px;left:620.50px;transform-origin:left center;transform:scaleX(0.754);">Vertex</span>
<div style="left:606.00px;top:216.80px;width:10.50px;height:1.00px;border-top:1px dashed #303030;"></div>
<span class="t" id="t45" style="font-size:9.6px;line-height:12px;color:#000;top:211.30px;left:620.50px;transform-origin:left center;transform:scaleX(0.736);">Edge</span>
<div style="left:606.00px;top:229.00px;width:10.50px;height:1.00px;border-top:1px dashed #303030;"></div>
<span class="t" id="t46" style="font-size:9.6px;line-height:12px;color:#000;top:223.50px;left:620.50px;transform-origin:left center;transform:scaleX(0.781);">Border</span>
<span class="t" id="t47" style="font-size:9.6px;line-height:12px;color:#000;top:235.70px;left:620.50px;transform-origin:left center;transform:scaleX(0.721);">Polygon</span>
<div style="left:597.00px;top:238.20px;width:103.00px;height:9.00px;background:#c8c8c8;border-top:1px solid #f4f4f4;"></div>
<div style="left:699.80px;top:187.00px;width:11.00px;height:51.50px;background:#dcdcdc;"></div>
<div class="btn" style="left:699.80px;top:187.00px;width:11.00px;height:10.50px;"></div>
<div class="btn" style="left:699.80px;top:197.50px;width:11.00px;height:18.00px;"></div>
<div class="btn" style="left:699.80px;top:227.50px;width:11.00px;height:10.50px;"></div>
<svg style="left:699.8px;top:187px" width="11" height="52" viewBox="0 0 11 52"><path d="M2.500 7h6L5.500 3.500zM2.500 44h6L5.500 47.500z" fill="#000"/></svg>
<div style="left:621.00px;top:247.00px;width:1.00px;height:13.00px;background:#808080;box-shadow:1px 0 0 #fff;"></div>
<div style="left:646.50px;top:247.00px;width:1.00px;height:13.00px;background:#808080;box-shadow:1px 0 0 #fff;"></div>
<svg style="left:600px;top:244px" width="112" height="20" viewBox="600 244 112 20"><path d="M601.500 253.500h5M606.500 250v7M607.500 251.500h3.500v4h-3.500zM611 253.500h1.500" stroke="#000" stroke-width="1.200" fill="none"/><path d="M630.500 249v5M633.500 249v10M630.500 251.500h3" stroke="#000" stroke-width="1.300" fill="none"/><path d="M631 254v5" stroke="#fff" stroke-width="1.200"/><path d="M655 249.500l3 6l3-6M658 255.500v3.500M655.500 258l2.500 1.500l2.500-1.500" stroke="#505050" stroke-width="1" fill="none"/><path d="M671.500 253.500h5v5h-5zM672.500 253.500v-2.500a1.500 1.500 0 0 1 3 0v2.500" stroke="#fff" stroke-width="1.100" fill="#e6e6e6"/><rect x="696" y="248" width="10" height="10" fill="#fff" stroke="#202080" stroke-width="1.400"/><path d="M696 250h10" stroke="#202080" stroke-width="2"/><path d="M699 253h3v3h-3zM703 252.500v4" stroke="#000" stroke-width="1" fill="none"/></svg>
<div style="left:594.50px;top:270.40px;width:121.50px;height:1.40px;background:#484848;box-shadow:0 1px 0 #e8e8e8;"></div>
<div style="left:594.20px;top:278.00px;width:119.50px;height:252.60px;border:1px solid;border-color:#808080 #505050 #505050 #808080;box-shadow:inset 1px 1px 0 #f0f0f0;"></div>
<div style="left:713.60px;top:277.70px;width:2.60px;height:250.00px;background:#1c1c1c;"></div>
<div class="hdr" style="left:598.00px;top:281.40px;width:112.00px;height:11.80px;"></div>
<span class="t" id="t48" style="font-size:9.6px;line-height:12px;color:#000;top:281.50px;left:623.34px;transform-origin:center center;transform:scaleX(0.775);">Edit Geometry</span>
<span class="t" id="t49" style="font-size:10px;line-height:12px;color:#000;top:281.30px;font-weight:bold;left:601.58px;transform-origin:center center;">+</span>
<div class="hdr" style="left:598.00px;top:297.70px;width:112.00px;height:11.50px;"></div>
<span class="t" id="t50" style="font-size:9.6px;line-height:12px;color:#000;top:297.65px;left:634.27px;transform-origin:center center;transform:scaleX(0.785);">Selection</span>
<span class="t" id="t51" style="font-size:10px;line-height:12px;color:#000;top:297.45px;font-weight:bold;left:602.83px;transform-origin:center center;">-</span>
<svg style="left:610px;top:312px" width="90" height="18" viewBox="610 312 90 18"><g fill="#e02020"><circle cx="613" cy="322.500" r="0.900"/><circle cx="616.500" cy="318" r="0.900"/><circle cx="618.500" cy="324" r="0.900"/><circle cx="621.500" cy="319.500" r="0.900"/><circle cx="620" cy="316" r="0.900"/></g><path d="M630 322l8.500-6l-2.500 9.500z" fill="none" stroke="#e02020" stroke-width="1"/><path d="M649 316.500c3-2 5 1 4.500 4.500c-.5 3-2 5-4 4.500c-1.500-.500-.5-2 .5-3c-2-1-2.500-4-1-6z" fill="none" stroke="#e02020" stroke-width="1"/><rect x="664.500" y="316" width="9" height="10" fill="#f01818"/><path d="M680 319l3-3h7.500v7.500l-3 3h-7.500z" fill="#e01010"/><path d="M680 319h7.500v7.500M687.500 319l3-3" stroke="#801010" stroke-width=".8" fill="none"/></svg>
<div style="left:602.50px;top:334.50px;width:9.00px;height:9.00px;background:#c8c8c8;border:1px solid;border-color:#808080 #fff #fff #808080;box-shadow:inset 1px 1px 0 #404040;"></div>
<div style="left:602.50px;top:350.00px;width:9.00px;height:9.00px;background:#c8c8c8;border:1px solid;border-color:#808080 #fff #fff #808080;box-shadow:inset 1px 1px 0 #404040;"></div>
<span class="t" id="t52" style="font-size:9.6px;line-height:12px;color:#808080;top:333.30px;left:616.00px;transform-origin:left center;transform:scaleX(0.755);text-shadow:1px 1px 0 #fff;">By Vertex</span>
<span class="t" id="t53" style="font-size:9.6px;line-height:12px;color:#808080;top:348.70px;left:616.00px;transform-origin:left center;transform:scaleX(0.794);text-shadow:1px 1px 0 #fff;">Ignore Backfacing</span>
<div class="btn" style="left:601.50px;top:366.00px;width:49.50px;height:12.70px;"></div>
<div class="btn" style="left:655.70px;top:366.00px;width:50.00px;height:12.70px;"></div>
<span class="t" id="t54" style="font-size:9.6px;line-height:12px;color:#808080;top:366.55px;left:612.60px;transform-origin:center center;transform:scaleX(0.772);text-shadow:1px 1px 0 #fff;">Shrink</span>
<span class="t" id="t55" style="font-size:9.6px;line-height:12px;color:#808080;top:366.55px;left:669.24px;transform-origin:center center;transform:scaleX(0.785);text-shadow:1px 1px 0 #fff;">Grow</span>
<div class="btn" style="left:601.50px;top:382.80px;width:49.50px;height:12.90px;"></div>
<div class="btn" style="left:655.70px;top:382.80px;width:50.00px;height:12.90px;"></div>
<span class="t" id="t56" style="font-size:9.6px;line-height:12px;color:#808080;top:383.45px;left:616.33px;transform-origin:center center;transform:scaleX(0.760);text-shadow:1px 1px 0 #fff;">Ring</span>
<span class="t" id="t57" style="font-size:9.6px;line-height:12px;color:#808080;top:383.45px;left:670.03px;transform-origin:center center;transform:scaleX(0.796);text-shadow:1px 1px 0 #fff;">Loop</span>
<span class="t" id="t58" style="font-size:9.6px;line-height:12px;color:#000;top:397.20px;left:625.00px;transform-origin:left center;transform:scaleX(0.799);">Whole Object Selected</span>
<div class="hdr" style="left:598.00px;top:420.80px;width:112.00px;height:10.70px;"></div>
<span class="t" id="t59" style="font-size:9.6px;line-height:12px;color:#000;top:420.35px;left:624.40px;transform-origin:center center;transform:scaleX(0.777);">Soft Selection</span>
<span class="t" id="t60" style="font-size:10px;line-height:12px;color:#000;top:420.15px;font-weight:bold;left:601.58px;transform-origin:center center;">+</span>
<div class="hdr" style="left:598.00px;top:436.00px;width:112.00px;height:9.90px;"></div>
<span class="t" id="t61" style="font-size:9.6px;line-height:12px;color:#000;top:435.15px;left:611.60px;transform-origin:center center;transform:scaleX(0.802);">Subdivision Surface</span>
<span class="t" id="t62" style="font-size:10px;line-height:12px;color:#000;top:434.95px;font-weight:bold;left:602.83px;transform-origin:center center;">-</span>
<div style="left:605.00px;top:455.30px;width:9.00px;height:9.00px;background:#fff;border:1px solid;border-color:#808080 #fff #fff #808080;box-shadow:inset 1px 1px 0 #404040;"></div>
<div style="left:605.00px;top:471.00px;width:9.00px;height:9.00px;background:#fff;border:1px solid;border-color:#808080 #fff #fff #808080;box-shadow:inset 1px 1px 0 #404040;"><svg style="left:0;top:0" width="8" height="8" viewBox="0 0 8 8"><path d="M1.200 3.500l2 2.200l3.300-4" stroke="#000" stroke-width="1.500" fill="none"/></svg></div>
<span class="t" id="t63" style="font-size:9.6px;line-height:12px;color:#000;top:454.00px;left:617.50px;transform-origin:left center;transform:scaleX(0.778);">Use NURMS Subdivision</span>
<span class="t" id="t64" style="font-size:9.6px;line-height:12px;color:#000;top:469.50px;left:617.50px;transform-origin:left center;transform:scaleX(0.779);">Smooth Result</span>
<div class="grp" style="left:600.80px;top:490.20px;width:107.60px;height:36.00px;"></div>
<div style="left:605.00px;top:485.00px;width:27.00px;height:10.00px;background:#c8c8c8;"></div>
<span class="t" id="t65" style="font-size:9.6px;line-height:12px;color:#000;top:484.00px;left:607.00px;transform-origin:left center;transform:scaleX(0.747);">Display</span>
<span class="t" id="t66" style="font-size:9.6px;line-height:12px;color:#000;top:494.20px;left:618.86px;transform-origin:right center;transform:scaleX(0.783);">Iterations:</span>
<span class="t" id="t67" style="font-size:9.6px;line-height:12px;color:#000;top:510.20px;left:605.00px;transform-origin:right center;transform:scaleX(0.768);">Smoothness:</span>
<div class="sunk" style="left:663.00px;top:494.80px;width:29.50px;height:11.00px;"></div>
<div class="sunk" style="left:663.00px;top:510.70px;width:29.50px;height:11.00px;"></div>
<span class="t" id="t68" style="font-size:9.6px;line-height:12px;color:#000;top:494.30px;left:666.00px;transform-origin:left center;">0</span>
<span class="t" id="t69" style="font-size:9.6px;line-height:12px;color:#000;top:510.20px;left:666.00px;transform-origin:left center;transform:scaleX(0.787);">1.0</span>
<svg style="left:695px;top:494.5px" width="7" height="12" viewBox="0 0 7 12"><path d="M3.500 1.500L6 4.500H1zM3.500 10.500L6 7.500H1z" fill="#000"/></svg>
<svg style="left:695px;top:510.5px" width="7" height="12" viewBox="0 0 7 12"><path d="M3.500 1.500L6 4.500H1zM3.500 10.500L6 7.500H1z" fill="#000"/></svg>
<div style="left:0.00px;top:500.00px;width:590.00px;height:10.50px;background:#c8c8c8;"></div>
<div class="btn" style="left:0.00px;top:499.50px;width:10.50px;height:11.00px;"></div>
<div class="btn" style="left:100.50px;top:499.50px;width:9.50px;height:11.00px;"></div>
<div class="btn" style="left:12.00px;top:499.50px;width:86.00px;height:12.00px;border-bottom:1.5px solid #181818;border-right-color:#303030;"></div>
<span class="t" id="t70" style="font-size:9.6px;line-height:12px;color:#000;top:499.30px;left:40.33px;transform-origin:center center;transform:scaleX(0.886);">0 / 100</span>
<span class="t" id="t71" style="font-size:8px;line-height:10px;color:#000;top:500.00px;left:2.66px;transform-origin:center center;">&lt;</span>
<span class="t" id="t72" style="font-size:8px;line-height:10px;color:#000;top:500.00px;left:102.96px;transform-origin:center center;">&gt;</span>
<div style="left:0.00px;top:511.50px;width:592.00px;height:23.00px;background:#d0d0d0;"></div>
<svg style="left:0;top:511px" width="590" height="24" viewBox="0 511 590 24"><path d="M37.00 513V521.500M42.16 513V521.500M47.31 513V521.500M52.47 513V521.500M57.62 513V521.500M62.78 513V521.500M67.93 513V521.500M73.09 513V521.500M78.24 513V521.500M83.40 513V521.500M88.55 513V521.500M93.71 513V521.500M98.86 513V521.500M104.02 513V521.500M109.17 513V521.500M114.33 513V521.500M119.48 513V521.500M124.64 513V521.500M129.79 513V521.500M134.94 513V521.500M140.10 513V521.500M145.25 513V521.500M150.41 513V521.500M155.56 513V521.500M160.72 513V521.500M165.88 513V521.500M171.03 513V521.500M176.19 513V521.500M181.34 513V521.500M186.50 513V521.500M191.65 513V521.500M196.81 513V521.500M201.96 513V521.500M207.12 513V521.500M212.27 513V521.500M217.43 513V521.500M222.58 513V521.500M227.74 513V521.500M232.89 513V521.500M238.05 513V521.500M243.20 513V521.500M248.36 513V521.500M253.51 513V521.500M258.67 513V521.500M263.82 513V521.500M268.98 513V521.500M274.13 513V521.500M279.29 513V521.500M284.44 513V521.500M289.60 513V521.500M294.75 513V521.500M299.91 513V521.500M305.06 513V521.500M310.22 513V521.500M315.37 513V521.500M320.53 513V521.500M325.68 513V521.500M330.84 513V521.500M335.99 513V521.500M341.15 513V521.500M346.30 513V521.500M351.46 513V521.500M356.61 513V521.500M361.77 513V521.500M366.92 513V521.500M372.07 513V521.500M377.23 513V521.500M382.38 513V521.500M387.54 513V521.500M392.69 513V521.500M397.85 513V521.500M403.00 513V521.500M408.16 513V521.500M413.31 513V521.500M418.47 513V521.500M423.62 513V521.500M428.78 513V521.500M433.94 513V521.500M439.09 513V521.500M444.25 513V521.500M449.40 513V521.500M454.56 513V521.500M459.71 513V521.500M464.87 513V521.500M470.02 513V521.500M475.18 513V521.500M480.33 513V521.500M485.49 513V521.500M490.64 513V521.500M495.80 513V521.500M500.95 513V521.500M506.11 513V521.500M511.26 513V521.500M516.41 513V521.500M521.57 513V521.500M526.73 513V521.500M531.88 513V521.500M537.04 513V521.500M542.19 513V521.500M547.35 513V521.500M552.50 513V521.500" stroke="#787878" stroke-width=".7" fill="none"/><rect x="34.800" y="513" width="5" height="20.500" fill="#c4d0e0" fill-opacity=".7" stroke="#607088" stroke-width=".9"/><path d="M9.800 518h10.400v2.800h-10.400z" fill="#e8e8e8" stroke="#101010" stroke-width="1.500"/><path d="M9.500 528.500h11" stroke="#101010" stroke-width="2.400"/><path d="M11 528.500h8" stroke="#e0e0e0" stroke-width=".7" stroke-dasharray="2 1"/><path d="M10.500 524.500h9M10.500 524.500l2.500-1.500M10.500 524.500l2.500 1.500M19.500 524.500l-2.500-1.500M19.500 524.500l-2.500 1.500" stroke="#101010" stroke-width=".9" fill="none"/></svg>
<span class="t" id="t73" style="font-size:9px;line-height:11px;color:#202020;top:521.80px;left:84.04px;transform-origin:center center;transform:scaleX(0.749);">10</span>
<span class="t" id="t74" style="font-size:9px;line-height:11px;color:#202020;top:521.80px;left:135.59px;transform-origin:center center;transform:scaleX(0.749);">20</span>
<span class="t" id="t75" style="font-size:9px;line-height:11px;color:#202020;top:521.80px;left:187.14px;transform-origin:center center;transform:scaleX(0.749);">30</span>
<span class="t" id="t76" style="font-size:9px;line-height:11px;color:#202020;top:521.80px;left:238.69px;transform-origin:center center;transform:scaleX(0.749);">40</span>
<span class="t" id="t77" style="font-size:9px;line-height:11px;color:#202020;top:521.80px;left:290.24px;transform-origin:center center;transform:scaleX(0.749);">50</span>
<span class="t" id="t78" style="font-size:9px;line-height:11px;color:#202020;top:521.80px;left:341.79px;transform-origin:center center;transform:scaleX(0.749);">60</span>
<span class="t" id="t79" style="font-size:9px;line-height:11px;color:#202020;top:521.80px;left:393.34px;transform-origin:center center;transform:scaleX(0.749);">70</span>
<span class="t" id="t80" style="font-size:9px;line-height:11px;color:#202020;top:521.80px;left:444.89px;transform-origin:center center;transform:scaleX(0.749);">80</span>
<span class="t" id="t81" style="font-size:9px;line-height:11px;color:#202020;top:521.80px;left:496.44px;transform-origin:center center;transform:scaleX(0.749);">90</span>
<span class="t" id="t82" style="font-size:9px;line-height:11px;color:#202020;top:521.80px;left:545.78px;transform-origin:center center;transform:scaleX(0.765);">100</span>
<div style="left:0.00px;top:534.50px;width:720.00px;height:1.00px;background:#fff;"></div>
<div class="sunk" style="left:1.50px;top:537.50px;width:207.50px;height:15.00px;background:#e4c4c2;"></div>
<div class="sunk" style="left:1.50px;top:555.00px;width:207.50px;height:14.00px;background:#fff;"></div>
<div style="left:210.50px;top:536.00px;width:1.00px;height:34.00px;background:#808080;box-shadow:1px 0 0 #fff;"></div>
<svg style="left:218px;top:538px" width="34" height="14" viewBox="218 538 34 14"><rect x="220.500" y="544.500" width="6.500" height="5" fill="#404040"/><path d="M222 544.500v-2a1.800 1.800 0 0 1 3.600 0v2" stroke="#404040" stroke-width="1.100" fill="none"/><rect x="237" y="540" width="10" height="10.500" fill="#f4f4f4" stroke="#000" stroke-width="1"/><path d="M240.500 543l3.500 2.500l-3.500 2.500z" fill="#000"/></svg>
<span class="t" id="t83" style="font-size:9.6px;line-height:12px;color:#787878;top:539.00px;left:254.00px;transform-origin:left center;transform:scaleX(0.937);text-shadow:1px 1px 0 #f0f0f0;">X</span>
<div class="sunk" style="left:261.70px;top:538.50px;width:39.00px;height:13.00px;background:#f2f2f2;"></div>
<span class="t" id="t84" style="font-size:9.6px;line-height:12px;color:#000;top:539.20px;left:264.20px;transform-origin:left center;transform:scaleX(0.729);">-1687,557c</span>
<svg style="left:301.7px;top:539px" width="7" height="12" viewBox="0 0 7 12"><path d="M3.500 1.500L6 4.500H1zM3.500 10.500L6 7.500H1z" fill="#000"/></svg>
<span class="t" id="t85" style="font-size:9.6px;line-height:12px;color:#787878;top:539.00px;left:311.50px;transform-origin:left center;transform:scaleX(0.937);text-shadow:1px 1px 0 #f0f0f0;">Y</span>
<div class="sunk" style="left:319.30px;top:538.50px;width:40.00px;height:13.00px;background:#f2f2f2;"></div>
<span class="t" id="t86" style="font-size:9.6px;line-height:12px;color:#000;top:539.20px;left:321.80px;transform-origin:left center;transform:scaleX(0.818);">-0,0cm</span>
<svg style="left:360.3px;top:539px" width="7" height="12" viewBox="0 0 7 12"><path d="M3.500 1.500L6 4.500H1zM3.500 10.500L6 7.500H1z" fill="#000"/></svg>
<span class="t" id="t87" style="font-size:9.6px;line-height:12px;color:#787878;top:539.00px;left:369.30px;transform-origin:left center;transform:scaleX(1.021);text-shadow:1px 1px 0 #f0f0f0;">Z</span>
<div class="sunk" style="left:376.70px;top:538.50px;width:33.80px;height:13.00px;background:#f2f2f2;"></div>
<span class="t" id="t88" style="font-size:9.6px;line-height:12px;color:#000;top:539.20px;left:379.20px;transform-origin:left center;transform:scaleX(0.774);">113,415c</span>
<div class="sunkg" style="left:214.50px;top:556.40px;width:121.50px;height:14.80px;"></div>
<span class="t" id="t89" style="font-size:9.6px;line-height:12px;color:#000;top:558.40px;left:219.50px;transform-origin:left center;transform:scaleX(0.785);">Click and drag to select and move</span>
<div class="sunkg" style="left:338.50px;top:556.40px;width:71.50px;height:14.80px;"></div>
<span class="t" id="t90" style="font-size:9.6px;line-height:12px;color:#000;top:558.40px;left:342.50px;transform-origin:left center;transform:scaleX(0.787);">Add Time Tag</span>
<div class="btn" style="left:410.60px;top:536.00px;width:28.80px;height:33.20px;"></div>
<svg style="left:410.600px;top:536.500px" width="29" height="33" viewBox="0 0 29 33"><circle cx="8.500" cy="16.500" r="3" fill="none" stroke="#000" stroke-width="2"/><path d="M11.500 16.500h11M18.500 16.500v4M21.500 16.500v3.500" stroke="#000" stroke-width="2.100" fill="none"/></svg>
<div class="btn" style="left:442.80px;top:536.70px;width:33.30px;height:15.00px;"></div>
<span class="t" id="t91" style="font-size:9.6px;line-height:12px;color:#000;top:539.00px;left:440.03px;transform-origin:center center;transform:scaleX(0.745);">Auto Key</span>
<div class="btn" style="left:442.80px;top:552.80px;width:33.30px;height:16.20px;"></div>
<span class="t" id="t92" style="font-size:9.6px;line-height:12px;color:#000;top:555.70px;left:442.70px;transform-origin:center center;transform:scaleX(0.714);">Set Key</span>
<div class="sunk" style="left:478.30px;top:536.70px;width:79.50px;height:14.30px;"></div>
<span class="t" id="t93" style="font-size:9.6px;line-height:12px;color:#000;top:538.00px;left:481.00px;transform-origin:left center;transform:scaleX(0.803);">Selected</span>
<div class="btn" style="left:547.00px;top:538.50px;width:9.80px;height:11.00px;"></div>
<svg style="left:547px;top:538.500px" width="10" height="11" viewBox="0 0 10 11"><path d="M2 4h5.500L4.750 7.500z" fill="#000"/></svg>
<div class="btn" style="left:478.30px;top:552.50px;width:79.50px;height:17.00px;"></div>
<span class="t" id="t94" style="font-size:9.6px;line-height:12px;color:#000;top:556.00px;left:492.64px;transform-origin:center center;transform:scaleX(0.732);">Key Filters...</span>
<svg style="left:560px;top:536px" width="160" height="36" viewBox="560 536 160 36"><path d="M566 540.500v7" stroke="#000" stroke-width="1.300"/><path d="M571 540.500v7l-4.300-3.500zM576 540.500v7l-4.300-3.500z" fill="#000"/><path d="M581 538v28" stroke="#a0a0a0" stroke-width="1"/><path d="M589.500 540.500v7l-4.500-3.500z" fill="#000"/><path d="M591 540.500v7M593.200 540.500v7" stroke="#000" stroke-width="1.100"/><rect x="600" y="539" width="10.700" height="10" fill="#e8e8e8" stroke="#000" stroke-width="1.300"/><path d="M603.500 541.500v5.500l4.500-2.800z" fill="#000"/><path d="M617 540.500v7M619.200 540.500v7" stroke="#000" stroke-width="1.100"/><path d="M620.800 540.500v7l4.500-3.500z" fill="#000"/><path d="M567 557v6.500" stroke="#000" stroke-width="1.200"/><path d="M573 557v6.500l-5-3.200z" fill="#000"/></svg>
<div class="sunk" style="left:582.00px;top:554.40px;width:50.00px;height:11.50px;"></div>
<span class="t" id="t95" style="font-size:9.6px;line-height:12px;color:#000;top:554.30px;left:585.50px;transform-origin:left center;">0</span>
<div class="sunk" style="left:195.80px;top:32.90px;width:47.50px;height:14.80px;background:#f4f4f4;"></div>
<span class="t" id="t96" style="font-size:9.6px;line-height:12px;color:#000;top:34.20px;left:198.80px;transform-origin:left center;transform:scaleX(0.750);">All</span>
<div class="btn" style="left:231.80px;top:34.40px;width:10.00px;height:11.80px;"></div>
<svg style="left:231.8px;top:34.400px" width="10" height="12" viewBox="0 0 10 12"><path d="M2 4.300h5.600L4.800 8z" fill="#000"/></svg>
<div class="sunk" style="left:363.60px;top:32.90px;width:46.90px;height:14.80px;background:#f4f4f4;"></div>
<span class="t" id="t97" style="font-size:9.6px;line-height:12px;color:#000;top:34.20px;left:366.60px;transform-origin:left center;transform:scaleX(0.776);">View</span>
<div class="btn" style="left:399.00px;top:34.40px;width:10.00px;height:11.80px;"></div>
<svg style="left:399.0px;top:34.400px" width="10" height="12" viewBox="0 0 10 12"><path d="M2 4.300h5.600L4.800 8z" fill="#000"/></svg>
<div class="sunk" style="left:578.30px;top:32.90px;width:83.00px;height:14.80px;background:#eeeeee;"></div>
<div class="btn" style="left:649.80px;top:34.40px;width:10.00px;height:11.80px;"></div>
<svg style="left:649.8px;top:34.400px" width="10" height="12" viewBox="0 0 10 12"><path d="M2 4.300h5.600L4.800 8z" fill="#000"/></svg>
<div style="left:296.00px;top:32.30px;width:21.30px;height:23.50px;background:#f0c83c;border:1px solid;border-color:#b09020 #fff0a0 #fff0a0 #b09020;"></div>
<div style="left:54.00px;top:33.00px;width:1.00px;height:22.00px;background:#a8a8a8;box-shadow:1px 0 0 #e8e8e8;"></div>
<div style="left:126.30px;top:33.00px;width:1.00px;height:22.00px;background:#a8a8a8;box-shadow:1px 0 0 #e8e8e8;"></div>
<div style="left:293.00px;top:33.00px;width:1.00px;height:22.00px;background:#a8a8a8;box-shadow:1px 0 0 #e8e8e8;"></div>
<div style="left:436.70px;top:33.00px;width:1.00px;height:22.00px;background:#a8a8a8;box-shadow:1px 0 0 #e8e8e8;"></div>
<div style="left:553.40px;top:33.00px;width:1.00px;height:22.00px;background:#a8a8a8;box-shadow:1px 0 0 #e8e8e8;"></div>
<div style="left:665.00px;top:33.00px;width:1.00px;height:22.00px;background:#a8a8a8;box-shadow:1px 0 0 #e8e8e8;"></div>
<svg style="left:0;top:28px" width="720" height="31" viewBox="0 28 720 31"><path d="M11.500 48.500c-1-7 2-12 7-12c4 0 6.500 3 6.500 7l-3.500 .5c0-2.500-1-4-3.200-4c-2.800 0-4 3.500-3.500 8z" fill="#8c8c8c" stroke="#383838" stroke-width=".8"/><path d="M9 45h7l-3.500 5z" fill="#f4f4f4" stroke="#303030" stroke-width=".8"/><path d="M46 48.500c1-7-2-12-7-12c-4 0-6.500 3-6.500 7l3.500 .5c0-2.500 1-4 3.200-4c2.800 0 4 3.500 3.500 8z" fill="#8c8c8c" stroke="#383838" stroke-width=".8"/><path d="M48.500 45h-7l3.500 5z" fill="#f4f4f4" stroke="#303030" stroke-width=".8"/><rect x="59.5" y="36" width="5.5" height="5.5" fill="#f4f4f8" stroke="#707080" stroke-width="1"/><rect x="69.5" y="46.8" width="6" height="6" fill="#f4f4f8" stroke="#707080" stroke-width="1"/><path d="M64 41l6.500 6.500" stroke="#c04030" stroke-width="2.200" stroke-dasharray="2.500 1"/><rect x="83" y="36" width="5.5" height="5.5" fill="#f4f4f8" stroke="#707080" stroke-width="1"/><rect x="91.5" y="46.5" width="6" height="6" fill="#f4f4f8" stroke="#707080" stroke-width="1"/><path d="M87.500 41.500l2 2M90.500 41.500h4" stroke="#505060" stroke-width="1.200" stroke-dasharray="1.500 1"/><path d="M106 39c2-3 5-3 7 0s5 3 7 0M106 43c2-3 5-3 7 0s5 3 7 0" stroke="#c03030" stroke-width="1.100" fill="none"/><path d="M117.500 36v11" stroke="#303030" stroke-width="1.200"/><rect x="107.5" y="46.8" width="5.5" height="6" fill="#f4f4f8" stroke="#707080" stroke-width="1"/><rect x="114.5" y="46.8" width="5.5" height="6" fill="#f4f4f8" stroke="#707080" stroke-width="1"/><path d="M136.500 36l7 9.500h-3.500l1.800 5l-1.800 .8l-2-5l-1.800 2z" fill="#fafafa" stroke="#303030" stroke-width=".9"/><path d="M155 36.800h9M155 39.500h9M155 42.200h6M155 45h5M155 47.700h5M155 50.400h5M155 52.700h5" stroke="#101010" stroke-width="1.400"/><path d="M163 42l5 7h-2.500l1.300 3.500l-1.300 .6l-1.400-3.600l-1.300 1.500z" fill="#fafafa" stroke="#303030" stroke-width=".8"/><rect x="177" y="36.800" width="14.500" height="14.800" fill="#e6e6ee" stroke="#101010" stroke-width="1.500" stroke-dasharray="1.600 1.300"/><path d="M192 55.500h2.500v-2.500z" fill="#000"/><rect x="248.800" y="36.800" width="13.500" height="14.800" fill="#e6e6ee" stroke="#101010" stroke-width="1.500" stroke-dasharray="1.600 1.300"/><circle cx="260" cy="43.600" r="3" fill="none" stroke="#101010" stroke-width="2.600"/><circle cx="278" cy="38" r="2" fill="#e8f0e0" stroke="#708060" stroke-width=".7"/><circle cx="278" cy="50" r="1.800" fill="#e8f0e0" stroke="#708060" stroke-width=".7"/><path d="M278 40v8M273 45.500l10.500-3.500" stroke="#60a040" stroke-width="1.500"/><circle cx="273.500" cy="45.500" r="1.300" fill="#f0f0f0"/><circle cx="283" cy="42" r="1.300" fill="#f0f0f0"/><path d="M306.800 38v13M300.800 44.500h12.500" stroke="#403408" stroke-width="1.600"/><path d="M306.800 36.500l-2.800 3.300h5.600zM306.800 52.500l-2.800-3.300h5.600zM299.800 44.500l3.300-2.800v5.600zM314 44.500l-3.300-2.800v5.600z" fill="#403408"/><path d="M334.500 40.500a6.200 7.300 0 1 1-7-3.200" fill="none" stroke="#484850" stroke-width="2.700"/><path d="M329.500 34.500l6.500 1.500l-4 5z" fill="#383840"/><path d="M325 49.500a4.500 5.500 0 0 0 8 0" fill="none" stroke="#c8c8d0" stroke-width=".8"/><rect x="346" y="38" width="11" height="12.300" fill="#b0b0b0" stroke="#505050" stroke-width="1"/><path d="M346 38h11v12.300" fill="none" stroke="#404040" stroke-width="1.800"/><rect x="346.500" y="44" width="5.500" height="6" fill="#fff0f4" stroke="#d08090" stroke-width=".8"/><path d="M357.500 55.500h2.500v-2.500z" fill="#000"/><defs><linearGradient id="pv" x1="0" y1="0" x2="0" y2="1"><stop offset="0" stop-color="#9098a8"/><stop offset="1" stop-color="#303848"/></linearGradient></defs><rect x="416.300" y="36.500" width="6" height="13.500" fill="url(#pv)" stroke="#303040" stroke-width=".8"/><rect x="424" y="36.500" width="6" height="13.500" fill="#d8dce8" stroke="#505870" stroke-width=".8"/><path d="M416.500 50.800h6M425 47.500h4" stroke="#e02020" stroke-width="1.300"/><path d="M431 55.500h2.500v-2.500z" fill="#000"/><path d="M443 50l6-8a3 3 0 0 1 4 3l-6 8" fill="none" stroke="#b4b4b4" stroke-width="2"/><text x="452" y="43" font-family="Liberation Sans,sans-serif" font-size="8" font-weight="bold" fill="#b0b0b0">3</text><path d="M467 50l-2.500-4.500a4.500 4.500 0 0 1 7.500-5l3.500 5l-2.500 1.800l-3.200-4.800a1.700 1.700 0 0 0-2.800 1.800l2.800 4.200z" fill="#e8a090" stroke="#b03828" stroke-width=".8"/><path d="M473 37l6.500 13.500h-11M473 37l-1.500 3M473 37l2.800 1.500" fill="none" stroke="#101010" stroke-width="1.200"/><path d="M489 50l-2.500-4.500a4.500 4.500 0 0 1 7.500-5l3.500 5l-2.500 1.800l-3.200-4.800a1.700 1.700 0 0 0-2.800 1.800l2.800 4.200z" fill="#e8a090" stroke="#b03828" stroke-width=".8"/><text x="494" y="43" font-family="Liberation Sans,sans-serif" font-size="9.500" font-weight="bold" fill="#101010">%</text><path d="M511.5 50l-2.500-4.500a4.500 4.500 0 0 1 7.500-5l3.500 5l-2.500 1.800l-3.200-4.800a1.700 1.700 0 0 0-2.800 1.800l2.800 4.200z" fill="#e8a090" stroke="#b03828" stroke-width=".8"/><rect x="519.600" y="35.500" width="5.500" height="11.300" fill="#404040"/><path d="M522.300 37l2 2.800h-4zM522.300 45.300l2-2.800h-4z" fill="#f0f0f0"/><path d="M532.500 41l7-4.500l8 2.500v9.500l-7 4l-8-2.500z" fill="#f4f4f4" stroke="#404040" stroke-width=".9"/><path d="M540.500 43v9.500l7-4v-9.500z" fill="#909090" stroke="#404040" stroke-width=".7"/><path d="M532.500 41l8 2l7-4" fill="none" stroke="#404040" stroke-width=".8"/><path d="M537 39.500l3.500-1.800l3 1l-3.500 2z" fill="#303030"/><path d="M561.500 36c-2 0-1.500 3-1.500 4s-1 1.500-1.500 1.500c.5 0 1.500 .5 1.500 1.500s-.5 4 1.500 4M565.500 36c2 0 1.500 3 1.500 4s1 1.500 1.500 1.500c-.5 0-1.500 .5-1.500 1.500s.5 4-1.500 4" fill="none" stroke="#505050" stroke-width="1"/><path d="M568.500 38l5 7h-2.500l1.300 3.500l-1.300 .6l-1.400-3.600l-1.300 1.500z" fill="#fafafa" stroke="#404040" stroke-width=".8"/><text x="558" y="54" font-family="Liberation Sans,sans-serif" font-size="5" font-weight="bold" fill="#303030">ABC</text><path d="M670.500 37v13.500l7-6.700zM685 37v13.500l-7-6.700z" fill="#508890" stroke="#305860" stroke-width=".8"/><path d="M677.800 35v18" stroke="#e090a8" stroke-width="1.300"/><ellipse cx="703" cy="42" rx="5" ry="6" transform="rotate(35 703 42)" fill="none" stroke="#e8a0b8" stroke-width="1.800"/><path d="M693.500 44.500l6-5.500l5.500 5l-6 6z" fill="#386878" stroke="#203840" stroke-width=".8"/><path d="M709 55.500h2.500v-2.500z" fill="#000"/></svg>
<svg style="left:630px;top:536px" width="90" height="36" viewBox="630 536 90 36"><rect x="672" y="538.500" width="9" height="9" fill="#f0f0f0" stroke="#c03030" stroke-width="1"/><path d="M672 543h9M676.500 538.500v9" stroke="#c03030" stroke-width=".8"/><circle cx="678" cy="547" r="3" fill="#e8e8f0" stroke="#303030" stroke-width=".9"/><rect x="691" y="539" width="8" height="8" fill="#8090b0" stroke="#303050" stroke-width=".9"/><rect x="694" y="542" width="8" height="8" fill="#e0e4f0" stroke="#303050" stroke-width=".9"/><rect x="706" y="538.500" width="10" height="9" fill="#f0f0f0" stroke="#c03030" stroke-width="1"/><path d="M706 543h10M711 538.500v9" stroke="#c03030" stroke-width=".8"/><path d="M635 558h4.500v2M635 558v8h6" fill="none" stroke="#303030" stroke-width="1"/><circle cx="641" cy="562.500" r="2.800" fill="#f4f0f0" stroke="#c03030" stroke-width="1"/><path d="M651 556v12" stroke="#909090" stroke-width="1"/><rect x="654.300" y="556" width="11" height="11.500" fill="#f8f8f8" stroke="#101010" stroke-width="1.300"/><circle cx="659" cy="560.500" r="2.600" fill="none" stroke="#202020" stroke-width="1"/><path d="M661 562.500l3 3.500" stroke="#202020" stroke-width="1.300"/><path d="M673 566.500l-1.500-4.500l-1-2.500l1.300-.5l1.700 2.500v-5l1.200-.3l.6 3.800l.3-4.500l1.300 0l.2 4.500l.8-3.800l1.200 .3l-.4 4.200l1.200-2.400l1 .5l-1.200 4.500l-.8 3.200z" fill="#fafafa" stroke="#303030" stroke-width=".8"/><path d="M689 565a4.500 4.500 0 1 1 8.500-1" fill="#f0e020" stroke="#807010" stroke-width=".9"/><ellipse cx="693" cy="565" rx="5" ry="2" fill="none" stroke="#807010" stroke-width=".8"/><path d="M692.500 557v5h5" fill="none" stroke="#303030" stroke-width=".8"/><rect x="704.500" y="556" width="6.500" height="6.500" fill="#8090c0" stroke="#202050" stroke-width=".9"/><rect x="708" y="560" width="5.500" height="6" fill="#e8ecf8" stroke="#202050" stroke-width=".9"/><path d="M714 569h2v-2z" fill="#000"/><path d="M683 569h2v-2zM699 569h2v-2z" fill="#000"/></svg>
<div style="left:0.00px;top:570.50px;width:720.00px;height:1.00px;background:#808080;"></div>
<div style="left:0.00px;top:571.50px;width:720.00px;height:4.50px;background:#c8c8c8;border-top:1px solid #fff;"></div>
<div style="left:1.00px;top:573.00px;width:36.00px;height:3.00px;background:#f4f4f4;"></div>
<div style="left:290.00px;top:573.00px;width:87.00px;height:3.00px;background:#e4e2de;"></div>
<span class="t" id="t98" style="font-size:39px;line-height:49px;color:#000;top:515.80px;left:619.60px;transform-origin:left center;transform:scaleX(1.039);-webkit-text-stroke:0.55px #000;">рис6</span>
</body></html>
